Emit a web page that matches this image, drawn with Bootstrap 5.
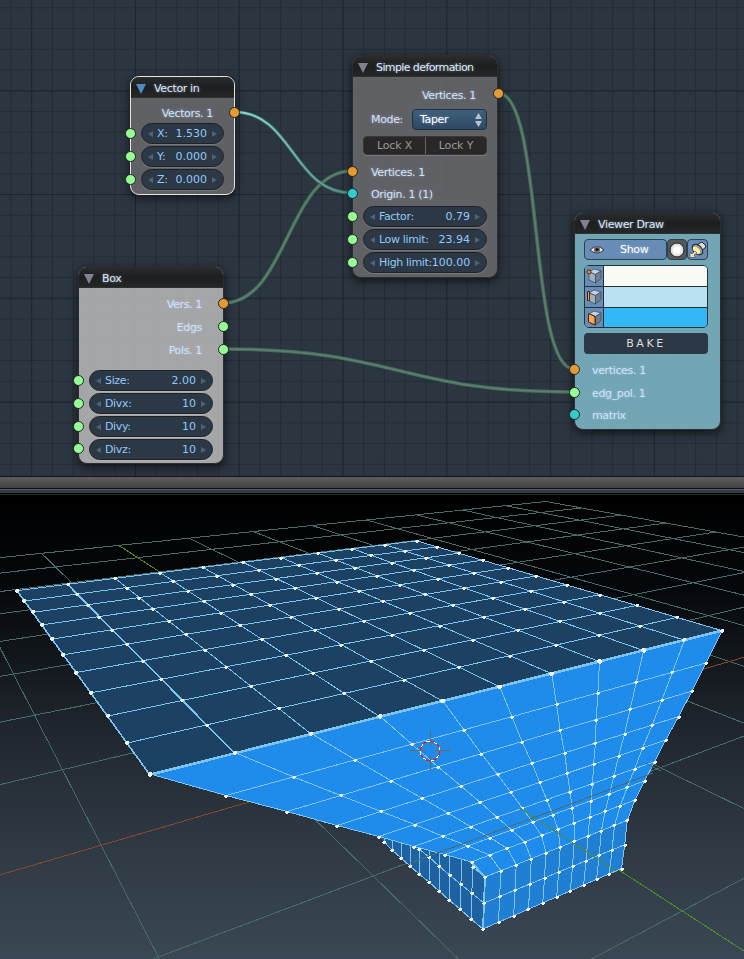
<!DOCTYPE html>
<html lang="en">
<head>
<meta charset="utf-8">
<title>Node editor</title>
<link href="https://cdn.jsdelivr.net/npm/bootstrap@5.3.0/dist/css/bootstrap.min.css" rel="stylesheet">
<style>
body{width:744px;height:959px;overflow:hidden;background:#000;font:11px/1 "DejaVu Sans","Liberation Sans",sans-serif;color:#cfe2fb;letter-spacing:-.35px}
.editor{height:476px;background-color:#2c3640;
 background-image:linear-gradient(90deg,#1e272e 1px,transparent 1px),linear-gradient(#1e272e 1px,transparent 1px),linear-gradient(90deg,#232c34 1px,transparent 1px),linear-gradient(#232c34 1px,transparent 1px);
 background-size:103.8px 103.8px,103.8px 103.8px,20.76px 20.76px,20.76px 20.76px;
 background-position:31.2px 0,0 90.3px,10.4px 0,0 7.3px}
.wires{left:0;top:0}
.node{border:1px solid #2b2d30;border-radius:9px;background:rgba(105,105,107,.86);box-shadow:0 3px 8px 1px rgba(0,0,0,.55);text-shadow:0 0 3px rgba(205,225,255,.5)}
.node.sel{border-color:#e8e4dc}
.node-head{height:21px;border-radius:8px 8px 0 0;background:linear-gradient(#2a2c2e,#1d1e1f 50%,#252726);padding:3px 0 0 5px;color:#dbe8fb;border-bottom:1px solid #2f3030}
.tri{border:5px solid transparent;border-top:10px solid #7c828e;border-bottom:0;margin-right:8px}
.sel .tri{border-top-color:#4c8cc4}
.node-body{padding:5px 10px 0}
.out{justify-content:flex-end;padding-right:11px}
.in{padding-left:8px}
.num{height:21px;margin-bottom:2px;border:1px solid #1f2224;border-radius:11px;background:#2c3845;color:#93c9f8;padding:0 6px;box-shadow:0 1px 0 rgba(255,255,255,.15);white-space:pre;text-shadow:none}
.num span{letter-spacing:0}
.num:before,.num:after{content:"";border:3px solid transparent}
.num:before{border-right:5px solid #4f6377;border-left:0;margin-right:4px}
.num:after{border-left:5px solid #4f6377;border-right:0;margin-left:5px}
.sock{position:absolute;width:11px;height:11px;border-radius:50%;border:1px solid #202426;background:#97fc93}
.sock.o{background:#e59a31}.sock.c{background:#33cbcb}
.drop{width:75px;height:21px;border:1px solid #21313f;border-radius:4px;background:linear-gradient(#3f617f,#2d4862);color:#fff;padding:0 4px 0 7px}
.lock{height:19px;border:1px solid #38383a;border-radius:4px;background:#2a2826;color:#999;text-shadow:none;box-shadow:0 1px 0 rgba(255,255,255,.15);letter-spacing:-.15px}
.lock span+span{border-left:1px solid #666}
.viewer{background:rgba(119,174,189,.93)}
.show{height:21px}
.show>div{border:1px solid #2c4254;border-radius:4px;background:#678db6;color:#fff}
.swatches{height:63px;border:1px solid #21303a;border-radius:5px;overflow:hidden}
.swatches>div+div{border-top:1px solid #21303a}
.swatches svg{width:19px;background:#678db6;border-right:1px solid #21303a}
.bake{height:21px;border-radius:4px;background:#2c3845;color:#dedede;letter-spacing:2.6px;text-shadow:none}
.h20{height:20px}.h22{height:22px}.h23{height:23px}
.splitter{height:19px;background:linear-gradient(#10151a 0 1px,#5d5d5d 1px,#424242 12px,#0c1013 12px 13px,#566068 13px 14px,#2f3a46 14px 17px,#000 17px 18px,#282522 18px)}
.view3d{height:464px;background:linear-gradient(#000 0,#05080b 20%,#1e242b 48%,#2d3741 72%,#3a4754 100%)}
</style>
<script src="https://cdn.jsdelivr.net/npm/bootstrap@5.3.0/dist/js/bootstrap.bundle.min.js"></script>
</head>
<body>
<main class="d-flex flex-column">
<section class="editor position-relative overflow-hidden">
 <svg class="wires position-absolute" width="744" height="476" fill="none">
  <path stroke="#40705a" stroke-width="3.6" d="M223 303C288 303 287 171 352 171M223 349C399 349 398 392 574 392M498 93C544 93 528 369 574 369"/>
  <path stroke="#647c70" stroke-width="1.5" d="M223 303C288 303 287 171 352 171M223 349C399 349 398 392 574 392M498 93C544 93 528 369 574 369"/>
  <defs><linearGradient id="g" x1="234" x2="352" y1="0" y2="0" gradientUnits="userSpaceOnUse"><stop stop-color="#8ce0df"/><stop offset="1" stop-color="#568674"/></linearGradient></defs>
  <path stroke="#37665f" stroke-width="3.6" d="M234 112C293 112 293 193 352 193"/>
  <path stroke="url(#g)" stroke-width="2" d="M234 112C293 112 293 193 352 193"/>
 </svg>

 <div class="node sel position-absolute" style="left:130px;top:76px;width:105px;height:119px">
  <div class="node-head d-flex align-items-center"><i class="tri"></i>Vector in</div>
  <div class="node-body"><div class="out h20 d-flex align-items-center">Vectors. 1</div>
   <div class="num d-flex align-items-center">X:<span class="ms-auto">1.530</span></div><div class="num d-flex align-items-center">Y:<span class="ms-auto">0.000</span></div><div class="num d-flex align-items-center">Z:<span class="ms-auto">0.000</span></div></div>
 </div>

 <div class="node position-absolute" style="left:352px;top:55px;width:146px;height:223px">
  <div class="node-head d-flex align-items-center" style="letter-spacing:-.6px"><i class="tri"></i>Simple deformation</div>
  <div class="node-body pt-2"><div class="out h20 d-flex align-items-center">Vertices. 1</div>
   <div class="in d-flex align-items-center justify-content-between mt-1">Mode:<div class="drop d-flex align-items-center justify-content-between">Taper<svg width="7" height="14"><path fill="#b3c3d2" d="M3.5 0 7 6H0zM3.5 14 0 8h7z"/></svg></div></div>
   <div class="lock d-flex align-items-stretch text-center" style="margin-top:6px"><span class="col-6 d-flex align-items-center justify-content-center">Lock X</span><span class="col-6 d-flex align-items-center justify-content-center">Lock Y</span></div>
   <div class="in h22 d-flex align-items-center" style="margin-top:6px">Vertices. 1</div><div class="in h23 d-flex align-items-center">Origin. 1 (1)</div>
   <div class="num d-flex align-items-center">Factor:<span class="ms-auto">0.79</span></div><div class="num d-flex align-items-center">Low limit:<span class="ms-auto">23.94</span></div><div class="num d-flex align-items-center">High limit:<span class="ms-auto">100.00</span></div></div>
 </div>

 <div class="node position-absolute" style="left:78px;top:266px;width:146px;height:198px;background:rgba(174,174,176,.93)">
  <div class="node-head d-flex align-items-center"><i class="tri"></i>Box</div>
  <div class="node-body"><div class="out h23 d-flex align-items-center">Vers. 1</div><div class="out h23 d-flex align-items-center">Edgs</div><div class="out h23 d-flex align-items-center mb-2">Pols. 1</div>
   <div class="num d-flex align-items-center">Size:<span class="ms-auto">2.00</span></div><div class="num d-flex align-items-center">Divx:<span class="ms-auto">10</span></div><div class="num d-flex align-items-center">Divy:<span class="ms-auto">10</span></div><div class="num d-flex align-items-center">Divz:<span class="ms-auto">10</span></div></div>
 </div>

 <div class="node viewer position-absolute" style="left:574px;top:212px;width:147px;height:218px">
  <div class="node-head d-flex align-items-center"><i class="tri"></i>Viewer Draw</div>
  <div class="node-body" style="padding-left:9px;padding-right:12px">
   <div class="show d-flex">
    <div class="d-flex align-items-center" style="width:83px;padding-left:4px"><svg width="16" height="12"><path fill="#eee" stroke="#333" d="M1 6Q8-1 15 6 8 12 1 6Z"/><circle cx="8" cy="5.5" r="3.2" fill="#777"/><circle cx="8" cy="5.5" r="1.6" fill="#111"/></svg><span style="margin-left:15px">Show</span></div>
    <div class="d-flex align-items-center justify-content-center" style="width:20px;background:#56585a"><svg class="flex-shrink-0" width="16" height="16"><defs><radialGradient id="s"><stop offset=".4" stop-color="#fff"/><stop offset="1" stop-color="#ccc"/></radialGradient></defs><circle cx="8" cy="8" r="7" fill="url(#s)" stroke="#222"/></svg></div>
    <div class="d-flex align-items-center justify-content-center" style="width:21px"><svg class="flex-shrink-0" width="18" height="18"><path fill="#ddd" stroke="#222" d="M11 2 13 1 17 5 16 7 13 9 8 4Z"/><ellipse cx="8.5" cy="8.5" rx="6.3" ry="4" transform="rotate(45 8.5 8.5)" fill="#999" stroke="#222"/><ellipse cx="7.5" cy="9.2" rx="4.4" ry="2.6" transform="rotate(45 7.5 9.2)" fill="#fdf09a"/><path fill="#dde8b8" stroke="#424" stroke-width=".5" d="M6 10 8 12 5 14 6.500 16.500H1V11L3 13Z"/></svg></div>
   </div>
   <div class="swatches d-flex flex-column" style="margin-top:5px">
    <div class="d-flex flex-fill" style="background:#f8faf3"><svg height="20"><use href="#cb"/><circle cx="4" cy="6" r="2" fill="#f08a2c" stroke="#531"/></svg></div>
    <div class="d-flex flex-fill" style="background:#bae1f2"><svg height="20"><use href="#cb"/><path fill="#f5a04d" stroke="#421" d="M2.500 4.500h2v9h-2z"/></svg></div>
    <div class="d-flex flex-fill" style="background:#31b8f5"><svg height="20"><use href="#cb"/><path fill="#ffa653" stroke="#421" d="M3.500 5.500 10 8.500V17L3.500 14Z"/></svg></div>
   </div>
   <div class="bake d-flex align-items-center justify-content-center" style="margin-top:5px">BAKE</div>
   <div style="padding-top:5px"><div class="h23 d-flex align-items-center" style="padding-left:8px">vertices. 1</div><div class="h22 d-flex align-items-center" style="padding-left:8px">edg_pol. 1</div><div class="h23 d-flex align-items-center" style="padding-left:8px">matrix</div></div>
  </div>
 </div>
 <svg width="0" height="0" class="position-absolute"><defs><g id="cb" stroke="#3b4854" stroke-width=".7"><path fill="#c3d3e1" d="M4 6 9 3 16 5 10.500 8.500Z"/><path fill="#9db0c2" d="M4 6 10.500 8.500V17L4 14Z"/><path fill="#6c7f91" d="M10.500 8.500 16 5V12.500L10.500 17Z"/></g></defs></svg>
 <div id="socks"></div>
</section>
<div class="splitter"></div>
<section class="view3d"><svg id="scene" class="d-block" width="744" height="464" viewBox="0 495 744 464"></svg></section>
</main>
<script>
// sockets: x, y, colour class
[[234,112,'o'],[130,133,''],[130,156,''],[130,179,''],[498,93,'o'],[352,171,'o'],[352,193,'c'],[352,216,''],[352,239,''],[352,262,''],
[223,303,'o'],[223,326,''],[223,349,''],[78,380,''],[78,403,''],[78,426,''],[78,448.500,''],[574,369,'o'],[574,392,''],[574,414,'c']].forEach(([x,y,c])=>{
 const d=document.createElement('i');d.className='sock '+c;d.style.left=x-5+'px';d.style.top=y-5.5+'px';document.getElementById('socks').append(d);});

// least-squares plane projection from [u,v,x,y] samples
function plane(pts){
 const A=[...Array(8)].map(()=>Array(9).fill(0));
 for(const [u,v,X,Y] of pts){const x=X/500,y=Y/500;
  for(const r of [[u,v,1,0,0,0,-u*x,-v*x,x],[0,0,0,u,v,1,-u*y,-v*y,y]])
   for(let i=0;i<8;i++)for(let j=0;j<9;j++)A[i][j]+=r[i]*r[j];}
 for(let i=0;i<8;i++){let p=i;for(let k=i;k<8;k++)if(Math.abs(A[k][i])>Math.abs(A[p][i]))p=k;[A[i],A[p]]=[A[p],A[i]];
  for(let k=0;k<8;k++)if(k!==i){const f=A[k][i]/A[i][i];for(let j=i;j<9;j++)A[k][j]-=f*A[i][j];}}
 const h=A.map((r,i)=>r[8]/r[i]);
 return (u,v)=>{const w=h[6]*u+h[7]*v+1;return w<.03?null:[500*(h[0]*u+h[1]*v+h[2])/w,500*(h[3]*u+h[4]*v+h[5])/w];};
}
let out='';
const P=a=>a.map(p=>p[0].toFixed(1)+','+p[1].toFixed(1)).join(' ');
const line=(a,c,w=1)=>out+=`<polyline points="${P(a)}" fill="none" stroke="${c}" stroke-width="${w}"/>`;
const poly=(a,c)=>out+=`<polygon points="${P(a)}" fill="${c}"/>`;
const dots=[];
const dot=(p,big)=>dots.push([p,big]);

// floor grid
const G=plane([[0,0,545,501.3],[2,0,465,510],[3,0,417,514.7],[5,0,312,526],[6,0,252.3,531.7],[7,0,189,538.7],[8,0,118,545.3],[9,0,41.7,553.7],[0,2,620,514.7],[0,3,665,523],[0,4,717,532],
 [10,5,13.3,673],[10,6,35,714],[10,7,63,769],[10,8,101,844],[10,9,159.5,956],[9,9,371,877],[7,9,661,771]]);
const run=(f)=>{const a=[];for(let t=0;t<=16;t+=.05){const p=f(t);if(!p)break;a.push(p);if(Math.abs(p[0])>3000||p[1]>3000)break;}return a;};
for(let k=0;k<=16;k++){
 if(k!==8){line(run(t=>G(k,t)),'#4a6a69');line(run(t=>G(t,k)),'#4a6a69');}
}
line(run(t=>G(8,t)),'#4f8d26');line(run(t=>G(t,8)),'#86472a');

// front face rows: left, middle and right x/y
const L=[[150,774],[226,795.5],[287,811.5],[337,825.5],[379,836.5],[414,846.5],[445,854.5],[471.5,862],[485,877],[484,903],[483,929]];
const M=[499.7,512,522,532,539.7,546.7,552.7,558,560.3,558.7,556.7];
const R=[[722,631],[706,663],[692,691],[678.7,716.5],[665.7,740],[654.7,761.7],[644.5,781],[635,800],[627.3,820.3],[624.7,844.7],[621.5,868.5]];
const F=L.map((l,i)=>{const r=(M[i]-l[0])/(R[i][0]-M[i]);return [...Array(11)].map((_,j)=>{const t=j/10,a=1-t,b=t*r;return [(a*l[0]+b*R[i][0])/(a+b),(a*l[1]+b*R[i][1])/(a+b)];});});
const E='#7cc4ee';
// left lower face
const B=[[483,929],[471,919],[460,909],[449,900],[439,891],[429,882],[419,874],[410,866],[401,858],[392,850],[384,841.5]];
const tops=[[485,877],[472.7,867],[461.8,859.5],[450,856.5],[439.5,853.5],[429.5,850.5],[420,848],[411,845.5],[401.5,843],[392.5,840.5],[384,838]];
const N=[[484,903],[471.5,893],[460.500,884],[449.500,875],[439,866],[429,857],[419,849]];
poly([...B,[380,837],...L.slice(5,9)],'#1e62a1');
B.forEach((b,i)=>line([b,tops[i]],E));line(N,E);line(B,E);line([L[8],tops[1],L[7]],E);
B.forEach(p=>dot(p));N.forEach(p=>dot(p));dot(tops[1]);
// front face
poly([...F[8],...[...F[10]].reverse()],'#217fd3');
poly([...L.slice(0,9),...F[8],...R.slice(0,9).reverse()],'#1f8bea');
F.forEach((r,i)=>{line(r,E);r.forEach(p=>dot(p,i===0));});
for(let j=0;j<11;j++)line(F.map(r=>r[j]),E);
line(L.slice(7),E,1.8);
// top face
const T=plane([[0,0,17,591],[10,0,417,541],[10,10,722,631],[0,10,150,774],[5,0,243,562],[5,10,499.7,687],[0,5,63,655],[10,5,535.5,575.5]]);
poly([T(0,0),T(10,0),T(10,10),T(0,10)],'#1d4162');
for(let i=0;i<=10;i++){line([T(i,0),T(i,10)],E,i<2?1.6:1);line([T(0,i),T(10,i)],E,i===10?2.6:1);
 for(let j=0;j<=10;j++)dot(T(i,j),i===0||j===10);}
dots.forEach(([p,b])=>{const x=Math.round(p[0]),y=Math.round(p[1]);out+=b?`<path fill="#f0f6ee" d="M${x-2} ${y-1}h1v-1h3v3h-1v1h-2v-1h-1z"/>`:`<path fill="#f0f6ee" d="M${x-1} ${y-1}h3v2h-1v1h-2v-1h-1v-1h1z"/>`;});
// floor lines showing through the mesh
line([[410,863],[583,799.5],[653,773]],'#4c6a74');
line([[520,808],[617,871.7]],'#4c8c34');line([[645,763],[661,771]],'#4a6a69');
// 3D cursor
out+=`<g fill="none"><circle cx="430" cy="751" r="9.700" stroke="#fff"/><circle cx="430" cy="751" r="9.700" stroke="#f01818" stroke-dasharray="3.8 3.8"/><path stroke="#6b6660" d="M410 750.5h15M435 750.5h15M430.5 731v15M430.5 756v15"/></g>`;
const s=document.getElementById('scene');s.setAttribute('shape-rendering','crispEdges');s.innerHTML=out;
</script>
</body>
</html>
